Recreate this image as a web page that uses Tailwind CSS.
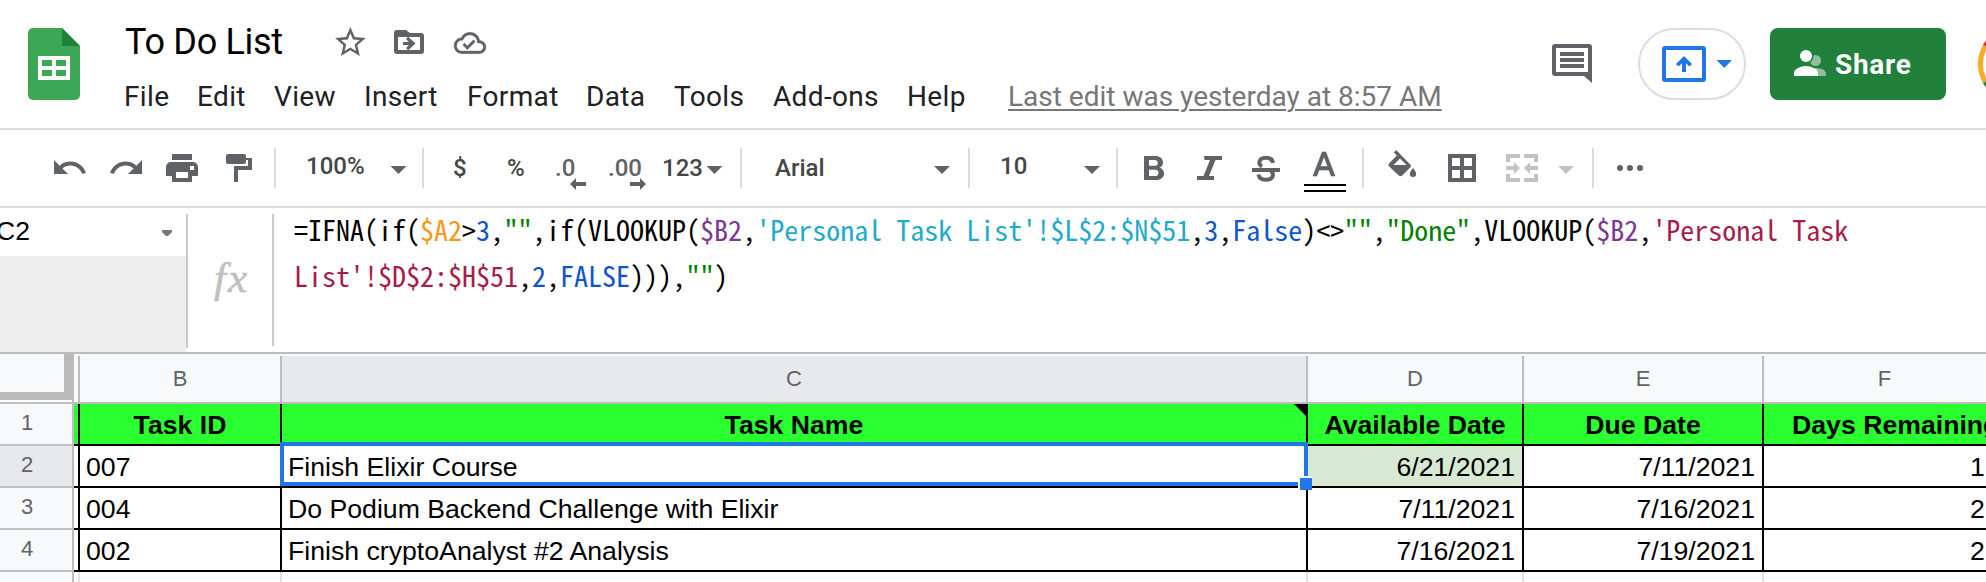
<!DOCTYPE html>
<html lang="en">
<head>
<meta charset="utf-8">
<title>To Do List</title>
<script src="https://cdn.jsdelivr.net/npm/@tailwindcss/browser@4"></script>
</head>
<body class="w-[1986px] h-[582px] overflow-hidden bg-white font-['Roboto',sans-serif] flex flex-col">

<!-- Header -->
<header class="flex h-[130px] shrink-0 border-b-2 border-[#dadbe1]">
  <svg class="shrink-0" width="124" height="128" viewBox="0 0 124 128">
    <path fill="#3ca755" d="M33 28H62L80 46V95a5 5 0 0 1-5 5H33a5 5 0 0 1-5-5V33a5 5 0 0 1 5-5z"/>
    <path fill="#22803d" d="M62 28L80 46H62z"/>
    <path fill="#fff" fill-rule="evenodd" d="M38 56H70V80H38zM42 60V66H52V60zM56 60V66H66V60zM42 70V76H52V70zM56 70V76H66V70z"/>
  </svg>
  <div class="flex flex-col w-[1414px] shrink-0">
    <div class="flex h-[75px] pt-[15px]">
      <div class="w-[196px] pl-[1px] text-[36px] leading-[54px] tracking-[-0.3px] text-black whitespace-nowrap">To Do List</div>
      <svg class="shrink-0 -mt-[15px]" width="180" height="74" viewBox="320 0 180 74" fill="#5f6368">
        <path transform="translate(332 23.9) scale(1.53)" d="M22 9.24l-7.19-.62L12 2 9.19 8.63 2 9.24l5.46 4.73L5.82 21 12 17.27 18.18 21l-1.63-7.03L22 9.24zM12 15.4l-3.76 2.27 1-4.28-3.32-2.88 4.38-.38L12 6.1l1.71 4.04 4.38.38-3.32 2.88 1 4.28L12 15.4z"/>
        <path fill-rule="evenodd" d="M397 30h9l4 3h11a3 3 0 0 1 3 3v15a3 3 0 0 1-3 3h-24a3 3 0 0 1-3-3V33a3 3 0 0 1 3-3zM398 37v13h22V37z"/>
        <path d="M403 42h6l-3-3 2.200-2.200 7.300 6.700-7.300 6.700-2.200-2.200 3-3h-6z"/>
        <path stroke="#5f6368" stroke-width=".25" transform="translate(454 27) scale(1.333)" d="M19.350 10.040C18.670 6.590 15.640 4 12 4 9.110 4 6.600 5.640 5.350 8.040 2.340 8.360 0 10.910 0 14c0 3.310 2.690 6 6 6h13c2.760 0 5-2.240 5-5 0-2.640-2.050-4.780-4.650-4.960zM19 18H6c-2.210 0-4-1.790-4-4 0-2.050 1.530-3.760 3.560-3.970l1.070-.11.5-.95C8.080 7.140 9.940 6 12 6c2.620 0 4.880 1.860 5.390 4.430l.3 1.500 1.530.11c1.560.1 2.780 1.410 2.780 2.960 0 1.650-1.350 3-3 3zm-9-3.820l-2.090-2.090L6.500 13.500 10 17l6.010-6.010-1.410-1.410z"/>
      </svg>
    </div>
    <nav class="flex text-[28px] leading-[44px] text-[#202124] tracking-[0.35px] whitespace-nowrap">
      <span class="w-[73px]">File</span><span class="w-[77px]">Edit</span><span class="w-[90px]">View</span><span class="w-[103px]">Insert</span><span class="w-[119px]">Format</span><span class="w-[88px]">Data</span><span class="w-[99px]">Tools</span><span class="w-[134px]">Add-ons</span><span class="w-[101px]">Help</span>
      <span class="text-[#777] tracking-normal underline decoration-2 underline-offset-[3px]">Last edit was yesterday at 8:57 AM</span>
    </nav>
  </div>
  <svg class="shrink-0" width="100" height="128" viewBox="1538 0 100 128" fill="#5f6368">
    <path fill-rule="evenodd" d="M1555 44h34a3 3 0 0 1 3 3v36l-8-7h-29a3 3 0 0 1-3-3V47a3 3 0 0 1 3-3zM1556 48v24h32V48z"/>
    <path d="M1560 52h24v4h-24zM1560 58h24v4h-24zM1560 64h24v4h-24z"/>
  </svg>
  <div class="mt-7 w-[108px] h-[72px] shrink-0 rounded-full border-2 border-[#dcdcdc]">
    <svg width="104" height="68" viewBox="1640 30 104 68" fill="#2277e8">
      <path fill-rule="evenodd" d="M1665 46h38a3 3 0 0 1 3 3v30a3 3 0 0 1-3 3h-38a3 3 0 0 1-3-3V49a3 3 0 0 1 3-3zM1666 50v28h36V50z"/>
      <path d="M1684 56l8 8-2.600 2.600-3.400-3.400V72h-4v-8.800l-3.400 3.400-2.600-2.600zM1716.500 60h15.500l-7.700 8z"/>
    </svg>
  </div>
  <button class="mt-7 ml-6 w-[176px] h-[72px] shrink-0 rounded-lg bg-[#21803c] flex items-center">
    <svg class="shrink-0" width="65" height="72" viewBox="1770 28 65 72">
      <g fill="#90c09d"><circle cx="1815.500" cy="60.500" r="5.500"/><path d="M1815 68c6 0 11 2 11 6v2h-11z"/></g>
      <circle cx="1806" cy="56" r="7.500" fill="#21803c"/>
      <g fill="#fff"><circle cx="1806" cy="56" r="6"/><path d="M1794 76v-3c0-4 7-7 12-7s12 3 12 7v3z"/></g>
    </svg>
    <span class="pt-[2px] text-[28px] font-bold text-white leading-[36px] tracking-[0.7px]">Share</span>
  </button>
  <svg class="shrink-0" width="40" height="128" viewBox="1946 0 40 128" fill="none" stroke-width="5">
    <path stroke="#ea3323" d="M1984.800 46.500A34.700 34.700 0 0 1 1995 35.500"/>
    <path stroke="#1e8e3e" d="M1984.800 81.500A34.700 34.700 0 0 0 1995 92.500"/>
    <path stroke="#f9ab24" d="M1985.300 46.200A34.700 34.700 0 0 0 1985.300 81.800"/>
  </svg>
</header>

<!-- Toolbar -->
<div class="flex h-[78px] shrink-0 border-b-2 border-[#dadbe1] text-[24px] leading-[28px] font-medium text-[#444746] whitespace-nowrap">
  <svg class="shrink-0" width="304" height="76" viewBox="0 130 304 76" fill="#5f6368">
    <path transform="translate(50.900 149.100) scale(1.560)" d="M12.500 8c-2.650 0-5.050.99-6.900 2.600L2 7v9h9l-3.620-3.620c1.390-1.160 3.160-1.880 5.120-1.880 3.540 0 6.550 2.310 7.600 5.500l2.370-.78C21.080 11.030 17.150 8 12.500 8z"/>
    <path transform="translate(107.700 149.100) scale(1.560)" d="M18.400 10.600C16.550 8.990 14.150 8 11.500 8c-4.650 0-8.580 3.030-9.960 7.220L3.900 16c1.050-3.190 4.050-5.500 7.600-5.500 1.950 0 3.730.72 5.120 1.880L13 16h9V7l-3.600 3.600z"/>
    <path fill-rule="evenodd" d="M172 154h20v6h-20zM171 162h22a5 5 0 0 1 5 5v9h-6v6h-20v-6h-6v-9a5 5 0 0 1 5-5zM176 172v6h12v-6zM190 166v4h4v-4z"/>
    <path d="M228 154h16a2 2 0 0 1 2 2v2h6v12h-14v12h-4v-16h14v-6h-2v2a2 2 0 0 1-2 2h-16a2 2 0 0 1-2-2v-6a2 2 0 0 1 2-2z"/>
    <path fill="#dadbe1" d="M274 148h2v40h-2z"/>
  </svg>
  <span class="w-[80px] pt-[22px] pl-[2px]">100%</span>
  <svg class="shrink-0" width="68" height="76" viewBox="384 130 68 76"><path fill="#5f6368" d="M390.500 166h16l-8 8z"/><path fill="#dadbe1" d="M422 148h2v40h-2z"/></svg>
  <span class="w-[54px] pt-[24px] pl-[1px]">$</span>
  <span class="w-[48px] pt-[24px] pl-[1px]">%</span>
  <div class="w-[54px] flex flex-col pt-[24px] text-[#5f6368]">
    <span class="h-[24px] pl-[1px]">.0</span>
    <svg width="54" height="14" viewBox="554 178 54 14" fill="#5f6368"><path d="M570 184l6-6v4h10v4h-10v4z"/></svg>
  </div>
  <div class="w-[54px] flex flex-col pt-[24px] text-[#5f6368]">
    <span class="h-[24px]">.00</span>
    <svg width="54" height="14" viewBox="608 178 54 14" fill="#5f6368"><path d="M646 184l-6-6v4h-10v4h10v4z"/></svg>
  </div>
  <span class="w-[42px] pt-[24px]">123</span>
  <svg class="shrink-0" width="70" height="76" viewBox="704 130 70 76"><path fill="#5f6368" d="M706.500 166h16l-8 8z"/><path fill="#dadbe1" d="M740 148h2v40h-2z"/></svg>
  <span class="w-[126px] pt-[24px] pl-[1px]">Arial</span>
  <svg class="shrink-0" width="100" height="76" viewBox="900 130 100 76"><path fill="#5f6368" d="M934 166h16l-8 8z"/><path fill="#dadbe1" d="M968 148h2v40h-2z"/></svg>
  <span class="w-[60px] pt-[22px]">10</span>
  <svg class="shrink-0" width="600" height="76" viewBox="1060 130 600 76" fill="#5f6368">
    <path d="M1084 166h16l-8 8z"/>
    <path fill-rule="evenodd" d="M1144 156h11c5 0 8 2.500 8 6.500 0 2.500-1.300 4.300-3.300 5.200 2.800.8 4.300 3 4.300 5.800 0 4-3 6.500-8 6.500h-12zM1149 160v5.800h5.500c2 0 3.300-1 3.300-2.900s-1.300-2.900-3.300-2.900zM1149 169.800v6.200h6c2.200 0 3.500-1.100 3.500-3.100s-1.300-3.100-3.500-3.100z"/>
    <path d="M1204 156h18v4h-6.500l-6.500 16h5v4h-17v-4h6.500l6.500-16h-5.500z"/>
    <path d="M1252 168h28v4h-28z"/>
    <path fill="none" stroke="#5f6368" stroke-width="4" d="M1273 163c-.5-3.500-3-5.300-7-5.300s-6.700 1.800-6.700 4.800c0 1.800 1 3 2.700 4M1258.500 174.500c.5 3.500 3.200 5.300 7.300 5.300s7.200-1.800 7.200-5c0-1.500-.6-2.600-1.800-3.800"/>
    <path fill-rule="evenodd" stroke="#5f6368" stroke-width=".6" d="M1322.200 152h3.600l9.200 24h-3.800l-2.200-6h-10l-2.200 6h-3.800zM1324 156.500l-3.700 10h7.400z"/>
    <path fill="#000" d="M1304 184h42v2h-42zM1304 190h42v2h-42z"/>
    <path fill-rule="evenodd" d="M1396.200 150l14 14.500c1 1 1 2 0 3l-8 8c-1 1-2.400 1-3.400 0l-9.600-9c-1-1-1-2.300 0-3.300l7.600-7.700-3-3.100zM1400 158.500l-6.500 6.500h13zM1413 168c2 2.600 3.200 4.400 3.200 5.800a3.200 3.200 0 0 1-6.400 0c0-1.400 1.200-3.200 3.200-5.800z"/>
    <path fill-rule="evenodd" d="M1448 154h28v28h-28zM1452 158v8h8v-8zM1464 158v8h8v-8zM1452 170v8h8v-8zM1464 170v8h8v-8z"/>
    <g fill="#c2c2c2">
      <path d="M1506 154h14v4h-10v4h-4zM1524 154h14v8h-4v-4h-10zM1506 174h4v4h10v4h-14zM1534 174h4v8h-14v-4h10z"/>
      <path d="M1506 166h8v-4l6 6-6 6v-4h-8zM1538 166h-8v-4l-6 6 6 6v-4h8z"/>
      <path d="M1558 166h16l-8 8z"/>
    </g>
    <circle cx="1620" cy="168" r="3"/><circle cx="1630" cy="168" r="3"/><circle cx="1640" cy="168" r="3"/>
    <path fill="#dadbe1" d="M1116 148h2v40h-2zM1362 148h2v40h-2zM1592 148h2v40h-2z"/>
  </svg>
</div>

<!-- Name box and formula bar -->
<div class="flex h-[146px] shrink-0 border-b-2 border-[#bdbdbd]">
  <div class="w-[186px] shrink-0 flex flex-col">
    <div class="h-12 flex">
      <span class="w-[152px] -ml-[4px] pt-[5px] text-[26.500px] leading-[36px] text-black font-['Liberation_Sans',sans-serif]">C2</span>
      <svg width="38" height="48" viewBox="148 208 38 48"><path fill="#777" d="M162 230h10v2l-4 4h-2l-4-4z"/></svg>
    </div>
    <div class="h-24 bg-[#eee]"></div>
  </div>
  <div class="w-[2px] h-[134px] mt-[6px] shrink-0 bg-[#c8c8c8]"></div>
  <div class="w-[84px] shrink-0 pl-[26px] pt-[46px] font-['Liberation_Serif',serif] italic text-[43px] leading-[48px] text-[#bfbfbf] tracking-[2px] [-webkit-text-stroke:0.6px_#bfbfbf]">fx</div>
  <div class="w-[2px] h-[132px] mt-[6px] shrink-0 bg-[#c8c8c8]"></div>
  <div class="-mt-[2px] pl-[20px] font-['Noto_Sans_Mono_CJK_SC','DejaVu_Sans_Mono',monospace] text-[28px] leading-[46px] text-black whitespace-pre">=IFNA(if(<span class="text-[#f7981d]">$A2</span>&gt;<span class="text-[#1155cc]">3</span>,<span class="text-[#008000]">""</span>,if(VLOOKUP(<span class="text-[#7e3794]">$B2</span>,<span class="text-[#22a9cc]">'Personal Task List'!$L$2:$N$51</span>,<span class="text-[#1155cc]">3</span>,<span class="text-[#1155cc]">False</span>)&lt;&gt;<span class="text-[#008000]">""</span>,<span class="text-[#008000]">"Done"</span>,VLOOKUP(<span class="text-[#7e3794]">$B2</span>,<span class="text-[#a61d4c]">'Personal Task
List'!$D$2:$H$51</span>,<span class="text-[#1155cc]">2</span>,<span class="text-[#1155cc]">FALSE</span>))),<span class="text-[#008000]">""</span>)</div>
</div>

<!-- Sheet -->
<div class="flex flex-1 font-['Liberation_Sans',sans-serif]">
  <!-- Row headers -->
  <div class="w-[72px] shrink-0 flex flex-col text-[22px] leading-[37px] text-[#5f6368] bg-[#f8f9fb] text-center">
    <div class="h-[46px] bg-[#f8f9fb] border-r-8 border-b-8 border-[#bababa]"></div>
    <div class="h-[4px] bg-white border-b-2 border-[#c0c0c0]"></div>
    <div class="h-[42px] pr-[18px] border-b-2 border-[#c0c0c0]">1</div>
    <div class="h-[42px] pr-[18px] border-b-2 border-[#c0c0c0] bg-[#e8e9ed]">2</div>
    <div class="h-[42px] pr-[18px] border-b-2 border-[#c0c0c0]">3</div>
    <div class="h-[42px] pr-[18px] border-b-2 border-[#c0c0c0]">4</div>
  </div>
  <div class="w-[2px] shrink-0 bg-[#bdbdbd]"></div>
  <!-- Cells -->
  <div class="relative flex flex-col w-[1932px] shrink-0 text-[26.670px] leading-[43px] text-black whitespace-nowrap">
    <div class="h-[50px] pt-[2px] bg-[#f8f9fb] border-b-2 border-[#bdbdbd] grid grid-cols-[6px_202px_1026px_216px_240px_242px] text-[22px] leading-[45px] text-[#5f6368] text-center">
      <div class="border-r-2 border-[#bdbdbd]"></div><div class="border-r-2 border-[#bdbdbd]">B</div><div class="border-r-2 border-[#bdbdbd] bg-[#e8e9ed]">C</div><div class="border-r-2 border-[#bdbdbd]">D</div><div class="border-r-2 border-[#bdbdbd]">E</div><div class="pl-[1px] border-r-2 border-[#bdbdbd]">F</div>
    </div>
    <div class="h-[42px] border-b-2 border-black bg-[#2aff2f] grid grid-cols-[6px_202px_1026px_216px_240px_242px] grid-rows-[40px] font-bold text-center">
      <div class="border-r-2 border-black"></div><div class="border-r-2 border-black">Task ID</div><div class="border-r-2 border-black">Task Name</div><div class="border-r-2 border-black">Available Date</div><div class="border-r-2 border-black">Due Date</div><div class="pl-[28px] text-left">Days Remaining</div>
    </div>
    <div class="h-[42px] border-b-2 border-black grid grid-cols-[6px_202px_1026px_216px_240px_242px] grid-rows-[40px]">
      <div class="border-r-2 border-black"></div><div class="border-r-2 border-black pl-[6px]">007</div><div class="border-r-2 border-black pl-[6px]">Finish Elixir Course</div><div class="border-r-2 border-black pr-[7px] text-right bg-[#d8e9d3]">6/21/2021</div><div class="border-r-2 border-black pr-[7px] text-right">7/11/2021</div><div class="pl-[206px]">1</div>
    </div>
    <div class="h-[42px] border-b-2 border-black grid grid-cols-[6px_202px_1026px_216px_240px_242px] grid-rows-[40px]">
      <div class="border-r-2 border-black"></div><div class="border-r-2 border-black pl-[6px]">004</div><div class="border-r-2 border-black pl-[6px]">Do Podium Backend Challenge with Elixir</div><div class="border-r-2 border-black pr-[7px] text-right">7/11/2021</div><div class="border-r-2 border-black pr-[7px] text-right">7/16/2021</div><div class="pl-[206px]">2</div>
    </div>
    <div class="h-[42px] border-b-2 border-black grid grid-cols-[6px_202px_1026px_216px_240px_242px] grid-rows-[40px]">
      <div class="border-r-2 border-black"></div><div class="border-r-2 border-black pl-[6px]">002</div><div class="border-r-2 border-black pl-[6px]">Finish cryptoAnalyst #2 Analysis</div><div class="border-r-2 border-black pr-[7px] text-right">7/16/2021</div><div class="border-r-2 border-black pr-[7px] text-right">7/19/2021</div><div class="pl-[206px]">2</div>
    </div>
    <div class="h-[10px] grid grid-cols-[6px_202px_1026px_216px_240px_242px]">
      <div class="border-r-2 border-[#e2e2e2]"></div><div class="border-r-2 border-[#e2e2e2]"></div><div class="border-r-2 border-[#e2e2e2]"></div><div class="border-r-2 border-[#e2e2e2]"></div><div class="border-r-2 border-[#e2e2e2]"></div><div></div>
    </div>
    <!-- Note marker, selection outline and fill handle -->
    <svg class="absolute left-[1220px] top-[50px]" width="14" height="14"><path d="M0 0h14v14z"/></svg>
    <div class="absolute left-[206px] top-[88px] w-[1028px] h-[44px] border-4 border-[#2277e8]"></div>
    <div class="absolute left-[1224px] top-[122px] w-[14px] h-[14px] bg-[#2277e8] border-l-2 border-t-2 border-white"></div>
  </div>
</div>
</body>
</html>
